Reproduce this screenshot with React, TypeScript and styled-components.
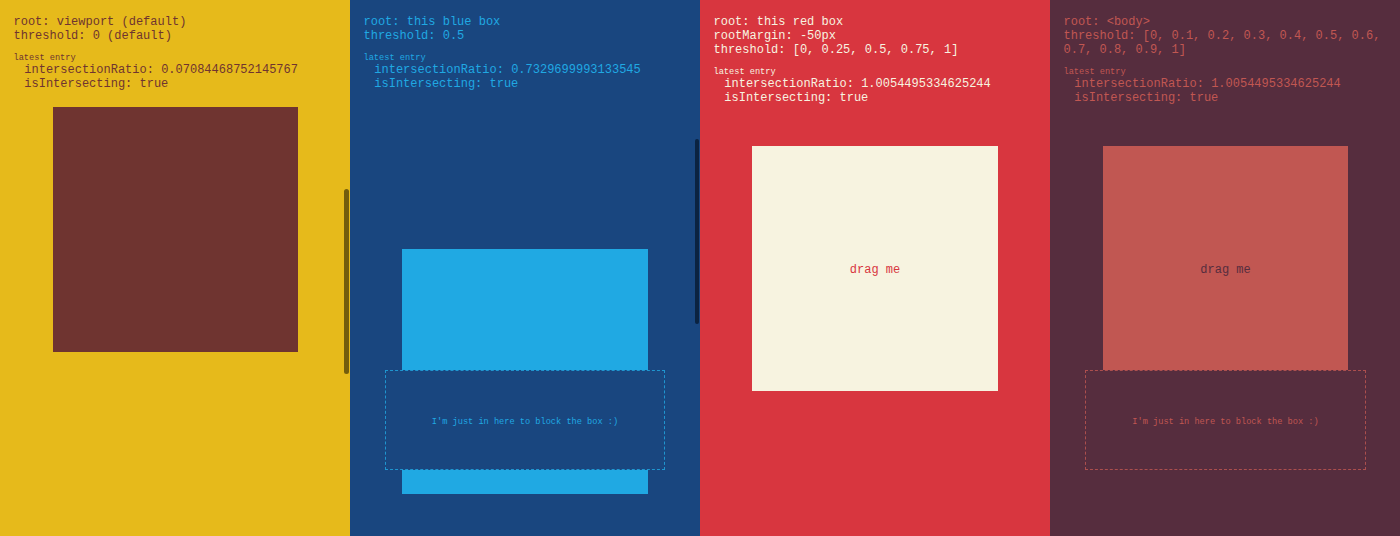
import React from "react";
import styled, { createGlobalStyle } from "styled-components";

const GlobalStyle = createGlobalStyle`
  * { box-sizing: border-box; }
  html, body { margin: 0; padding: 0; overflow: hidden; }
`;

const Page = styled.main`
  display: grid;
  grid-template-columns: repeat(4, 1fr);
  height: 100vh;
  font: 12px/14px "Liberation Mono", monospace;
`;

const Panel = styled.section<{ $bg: string; $fg: string }>`
  position: relative;
  display: flex;
  flex-direction: column;
  padding-top: 15px;
  overflow: hidden;
  background: ${(p) => p.$bg};
  color: ${(p) => p.$fg};
`;

const Info = styled.header`
  padding: 0 13.5px;
`;

const Line = styled.p`
  margin: 0;
`;

const EntryLabel = styled.p`
  margin: 10px 0 0;
  font-size: 8.64px;
  line-height: 10px;
`;

const Entry = styled.div`
  padding-left: 10.8px;
  white-space: nowrap;
`;

const Target = styled.div<{ $gap: number; $left: number; $width: number }>`
  display: flex;
  flex: none;
  align-items: center;
  justify-content: center;
  width: ${(p) => p.$width}px;
  height: 245px;
  margin-top: ${(p) => p.$gap}px;
  margin-left: ${(p) => p.$left}px;
  padding-top: 2px;
  background: currentColor;
`;

const DragLabel = styled.span<{ $ink: string }>`
  color: ${(p) => p.$ink};
`;

const Blocker = styled.div<{ $bg: string; $width: number }>`
  position: absolute;
  top: 370px;
  left: 35px;
  display: flex;
  align-items: center;
  justify-content: center;
  width: ${(p) => p.$width}px;
  height: 100px;
  padding-top: 4px;
  border: 1px dashed color-mix(in srgb, currentColor 80%, ${(p) => p.$bg});
  background: ${(p) => p.$bg};
  font-size: 8.64px;
`;

const Thumb = styled.i<{ $top: number; $width: number; $color: string }>`
  position: absolute;
  top: ${(p) => p.$top}px;
  right: 1px;
  width: ${(p) => p.$width}px;
  height: 185px;
  border-radius: 3px;
  background: ${(p) => p.$color};
`;

interface PanelData {
  bg: string;
  fg: string;
  options: string[];
  ratio: string;
  gap: number;
  left: number;
  width: number;
  draggable?: boolean;
  blocker?: number;
  thumb?: { top: number; width: number; color: string };
}

const panels: PanelData[] = [
  {
    bg: "#e6ba1b",
    fg: "#6f3430",
    options: ["root: viewport (default)", "threshold: 0 (default)"],
    ratio: "0.07084468752145767",
    gap: 16,
    left: 53,
    width: 245,
    thumb: { top: 189, width: 5, color: "#735d0d" },
  },
  {
    bg: "#19467f",
    fg: "#20a9e3",
    options: ["root: this blue box", "threshold: 0.5"],
    ratio: "0.7329699993133545",
    gap: 158,
    left: 52,
    width: 246,
    blocker: 280,
    thumb: { top: 139, width: 4, color: "#0b2341" },
  },
  {
    bg: "#d8363f",
    fg: "#f7f3e0",
    options: ["root: this red box", "rootMargin: -50px", "threshold: [0, 0.25, 0.5, 0.75, 1]"],
    ratio: "1.0054495334625244",
    gap: 41,
    left: 52,
    width: 246,
    draggable: true,
  },
  {
    bg: "#562d3e",
    fg: "#c15752",
    options: ["root: <body>", "threshold: [0, 0.1, 0.2, 0.3, 0.4, 0.5, 0.6, 0.7, 0.8, 0.9, 1]"],
    ratio: "1.0054495334625244",
    gap: 41,
    left: 53,
    width: 245,
    draggable: true,
    blocker: 281,
  },
];

export default function App() {
  return (
    <>
      <GlobalStyle />
      <Page>
        {panels.map((p) => (
          <Panel key={p.bg} $bg={p.bg} $fg={p.fg}>
            <Info>
              {p.options.map((o) => (
                <Line key={o}>{o}</Line>
              ))}
              <EntryLabel>latest entry</EntryLabel>
              <Entry>
                <Line>intersectionRatio: {p.ratio}</Line>
                <Line>isIntersecting: true</Line>
              </Entry>
            </Info>
            <Target $gap={p.gap} $left={p.left} $width={p.width}>
              {p.draggable && <DragLabel $ink={p.bg}>drag me</DragLabel>}
            </Target>
            {p.blocker && (
              <Blocker $bg={p.bg} $width={p.blocker}>
                I'm just in here to block the box :)
              </Blocker>
            )}
            {p.thumb && <Thumb $top={p.thumb.top} $width={p.thumb.width} $color={p.thumb.color} />}
          </Panel>
        ))}
      </Page>
    </>
  );
}
